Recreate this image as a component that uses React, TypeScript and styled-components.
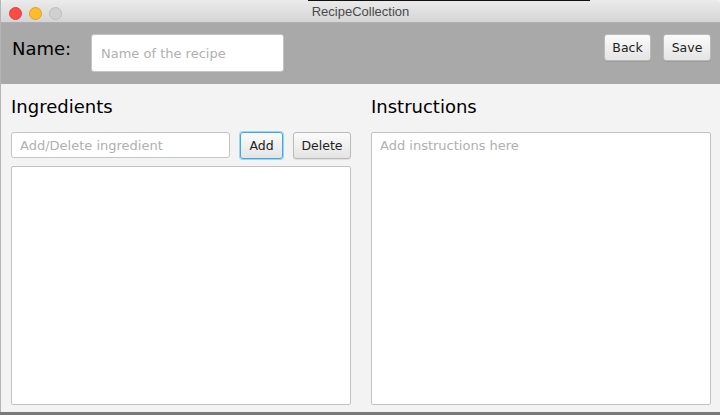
import React from "react";
import styled, { createGlobalStyle } from "styled-components";

const Global = createGlobalStyle`
  html, body { margin: 0; padding: 0; background: #6b6b6b; }
  body { font-family: "DejaVu Sans", "Liberation Sans", sans-serif; }
  * { box-sizing: border-box; }
`;

const Screen = styled.div`
  width: 720px;
  height: 415px;
  display: flex;
  flex-direction: column;
  overflow: hidden;
  background: #7a7a7a;
`;

const Window = styled.div`
  width: 720px;
  height: 412px;
  display: flex;
  flex-direction: column;
  background: #f3f3f3;
  border-left: 1px solid #b5b5b5;
  position: relative;
`;

const TopStrip = styled.div`
  position: absolute;
  z-index: 2;
  top: 0;
  left: 307px;
  width: 282px;
  height: 1px;
  background: #111;
`;

const TitleBar = styled.div`
  height: 23px;
  flex: none;
  display: flex;
  align-items: center;
  justify-content: center;
  position: relative;
  background: linear-gradient(#ebebeb, #d5d5d5);
  border-bottom: 1px solid #b0b0b0;
  border-radius: 4px 4px 0 0;
`;

const Lights = styled.div`
  position: absolute;
  left: 8px;
  top: 7px;
  display: flex;
  gap: 7px;
`;

const Light = styled.span<{ $c: string; $b: string }>`
  display: block;
  flex: none;
  width: 13px;
  height: 13px;
  border-radius: 50%;
  background: ${(p) => p.$c};
  border: 1px solid ${(p) => p.$b};
`;

const Title = styled.div`
  font-family: "Liberation Sans", sans-serif;
  font-size: 13px;
  color: #4a4a4a;
`;

const Toolbar = styled.div`
  height: 61px;
  flex: none;
  display: flex;
  align-items: flex-start;
  padding: 11px 9px 0 11px;
  background: #a9a9a9;
`;

const NameLabel = styled.div`
  font-size: 18px;
  color: #000;
  width: 79px;
  margin-top: 4px;
`;

const NameField = styled.div`
  width: 193px;
  height: 38px;
  background: #fff;
  border: 1px solid #c4c4c4;
  border-radius: 3px;
  display: flex;
  align-items: center;
  padding-left: 9px;
  font-size: 13px;
  color: #b0b0b0;
`;

const Spacer = styled.div`
  flex: 1;
`;

const Button = styled.div<{ $focus?: boolean; $w: number }>`
  width: ${(p) => p.$w}px;
  height: 27px;
  display: flex;
  align-items: center;
  justify-content: center;
  font-size: 12.5px;
  color: #222;
  border-radius: 3px;
  background: linear-gradient(#fbfbfb, #e4e4e4);
  border: 1px solid ${(p) => (p.$focus ? "#3fa7e6" : "#b9b9b9")};
  box-shadow: ${(p) => (p.$focus ? "0 0 0 1px #9fd3f3" : "0 1px 0 rgba(0,0,0,0.08)")};
`;

const ButtonRow = styled.div`
  display: flex;
  gap: 12px;
`;

const Content = styled.div`
  flex: 1;
  display: grid;
  grid-template-columns: 340px 340px;
  column-gap: 20px;
  padding: 12px 9px 7px 10px;
`;

const Column = styled.div`
  display: flex;
  flex-direction: column;
`;

const Heading = styled.div`
  font-size: 18px;
  color: #000;
  height: 36px;
`;

const InputRow = styled.div`
  display: flex;
  gap: 10px;
  margin-bottom: 7px;
`;

const TextField = styled.div`
  width: 219px;
  height: 26px;
  background: #fff;
  border: 1px solid #c4c4c4;
  border-radius: 3px;
  display: flex;
  align-items: center;
  padding-left: 8px;
  font-size: 13px;
  color: #b0b0b0;
`;

const Box = styled.div`
  flex: 1;
  background: #fff;
  border: 1px solid #c2c2c2;
  border-radius: 2px;
  font-size: 13px;
  color: #b0b0b0;
  padding: 5px 8px;
`;

export default function App() {
  return (
    <>
      <Global />
      <Screen>
        <Window>
          <TopStrip />
          <TitleBar>
            <Lights>
              <Light $c="#fc4a48" $b="#e0403d" />
              <Light $c="#fdbc2b" $b="#e0a11f" />
              <Light $c="#d0d0d0" $b="#bdbdbd" />
            </Lights>
            <Title>RecipeCollection</Title>
          </TitleBar>
          <Toolbar>
            <NameLabel>Name:</NameLabel>
            <NameField>Name of the recipe</NameField>
            <Spacer />
            <ButtonRow>
              <Button $w={47}>Back</Button>
              <Button $w={48}>Save</Button>
            </ButtonRow>
          </Toolbar>
          <Content>
            <Column>
              <Heading>Ingredients</Heading>
              <InputRow>
                <TextField>Add/Delete ingredient</TextField>
                <Button $focus $w={43}>Add</Button>
                <Button $w={58}>Delete</Button>
              </InputRow>
              <Box />
            </Column>
            <Column>
              <Heading>Instructions</Heading>
              <Box>Add instructions here</Box>
            </Column>
          </Content>
        </Window>
      </Screen>
    </>
  );
}
